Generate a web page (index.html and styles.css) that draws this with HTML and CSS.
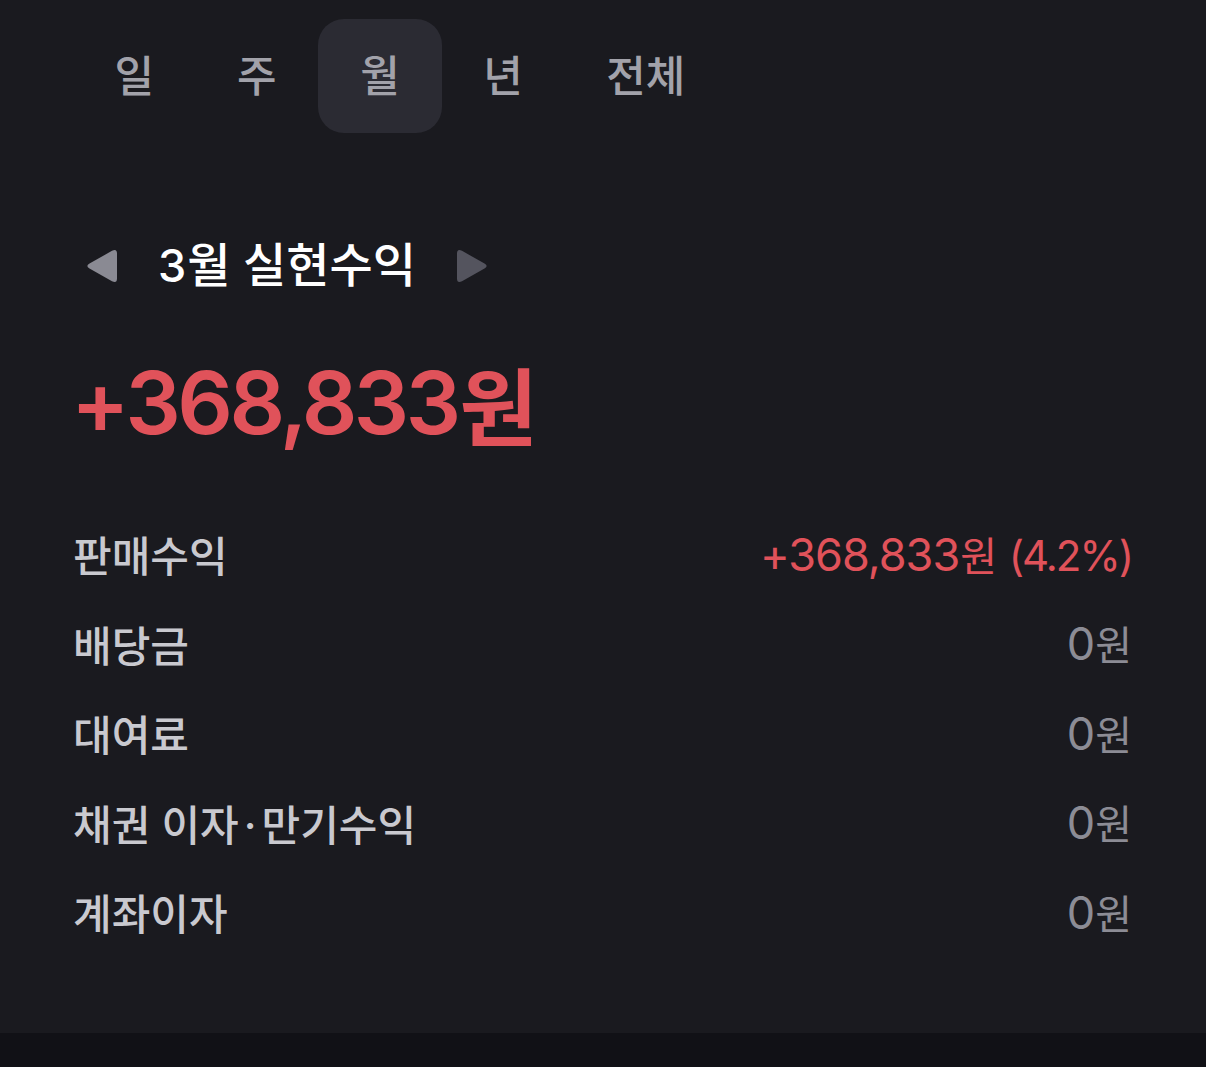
FILE: index.html
```html
<!DOCTYPE html>
<html lang="ko">
<head>
<meta charset="utf-8">
<title>실현수익</title>
<link rel="stylesheet" href="styles.css">
</head>
<body>
<main class="screen">
  <nav class="tabs">
    <span class="tab">일</span>
    <span class="tab">주</span>
    <span class="tab active">월</span>
    <span class="tab">년</span>
    <span class="tab wide">전체</span>
  </nav>

  <div class="period">
    <svg class="arrow arrow-prev" width="32" height="34" viewBox="0 0 32 34"><path d="M3.5 14.6 L26 1.8 Q31 -0.6 31 4.6 L31 29.4 Q31 34.6 26 32.2 L3.5 19.4 Q-0.8 17 3.5 14.6 Z" fill="#8a8a93"/></svg>
    <h1 class="period-title"><span class="num">3</span>월 실현수익</h1>
    <svg class="arrow arrow-next" width="32" height="34" viewBox="0 0 32 34"><path d="M28.5 14.6 L6 1.8 Q1 -0.6 1 4.6 L1 29.4 Q1 34.6 6 32.2 L28.5 19.4 Q32.8 17 28.5 14.6 Z" fill="#54545e"/></svg>
  </div>

  <div class="total">+368,833<span class="unit">원</span></div>

  <ul class="rows">
    <li class="row"><span class="label">판매수익</span><span class="value plus">+368,833<span class="unit">원</span> <span class="pct">(4.2%)</span></span></li>
    <li class="row"><span class="label">배당금</span><span class="value">0<span class="unit">원</span></span></li>
    <li class="row"><span class="label">대여료</span><span class="value">0<span class="unit">원</span></span></li>
    <li class="row"><span class="label">채권 이자<span class="dot">·</span>만기수익</span><span class="value">0<span class="unit">원</span></span></li>
    <li class="row"><span class="label">계좌이자</span><span class="value">0<span class="unit">원</span></span></li>
  </ul>
</main>
<footer class="bottom-band"></footer>
</body>
</html>
```

FILE: styles.css
```css
* { box-sizing: border-box; }

html, body {
  margin: 0;
  padding: 0;
  background: #1a1a1f;
}

body {
  font-family: "Inter", "Noto Sans CJK KR", "Noto Sans", sans-serif;
  color: #c9c9cf;
  width: 1206px;
  height: 1067px;
  overflow: hidden;
  display: flex;
  flex-direction: column;
}

.screen {
  height: 1033px;
  padding: 0 74px 0 73px;
}

.tabs {
  display: flex;
  padding-top: 19px;
  height: 150px;
}

.tab {
  height: 114px;
  padding: 0 41.5px 6px 41.5px;
  display: flex;
  align-items: center;
  font-size: 43px;
  font-weight: 500;
  color: #a2a2aa;
  border-radius: 26px;
}

.tab.active {
  background: #2b2b33;
  padding-left: 42px;
  padding-right: 42px;
}

.tab.wide {
  padding-left: 42px;
}

.period {
  display: flex;
  align-items: center;
  height: 90px;
  margin-top: 71px;
  padding-left: 13px;
}

.arrow { display: block; flex: none; }

.period-title {
  margin: 0 40px 0 40px;
  font-size: 47px;
  font-weight: 500;
  color: #ffffff;
  line-height: 1;
  padding-bottom: 4px;
}

.period-title .num {
  font-size: 45px;
  margin-right: 1px;
}

.total {
  margin-top: 36px;
  height: 110px;
  display: flex;
  align-items: center;
  font-size: 87px;
  font-weight: 600;
  color: #e0525a;
  letter-spacing: -3.5px;
  margin-left: -2px;
}

.total .unit {
  font-size: 85px;
  letter-spacing: 0;
  margin-left: 2px;
}

.rows {
  list-style: none;
  margin: 52px 0 0 0;
  padding: 0;
}

.row {
  height: 89.5px;
  display: flex;
  align-items: center;
  justify-content: space-between;
}

.label {
  font-size: 42px;
  font-weight: 500;
  color: #c9c9cf;
}

.label .dot {
  margin: 0 5px;
}

.value {
  font-size: 45px;
  font-weight: 400;
  color: #8c8c95;
  letter-spacing: -1px;
}

.value .unit {
  font-size: 40px;
  letter-spacing: 0;
  margin-left: 1px;
}

.value .pct {
  font-size: 42px;
  letter-spacing: -2px;
}

.value.plus {
  color: #e0525a;
}

.bottom-band {
  flex: 1;
  background: #111116;
}
```
